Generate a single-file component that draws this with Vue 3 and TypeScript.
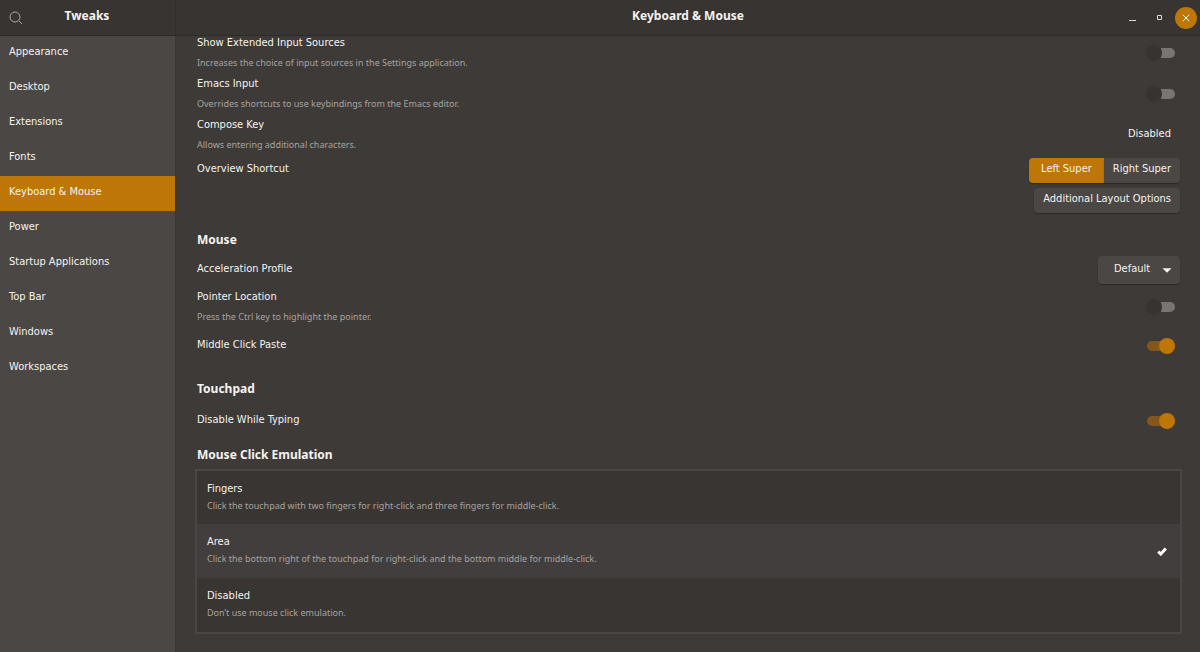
<script setup lang="ts">
import { ref } from 'vue'

const pages = ['Appearance', 'Desktop', 'Extensions', 'Fonts', 'Keyboard & Mouse', 'Power', 'Startup Applications', 'Top Bar', 'Windows', 'Workspaces']
const current = ref('Keyboard & Mouse')

const extended = ref(false)
const emacs = ref(false)
const pointer = ref(false)
const middlePaste = ref(true)
const whileTyping = ref(true)
const overview = ref('Left Super')
const profile = ref('Default')
const emulation = ref('Area')

const modes = [
  { name: 'Fingers', note: 'Click the touchpad with two fingers for right-click and three fingers for middle-click.' },
  { name: 'Area', note: 'Click the bottom right of the touchpad for right-click and the bottom middle for middle-click.' },
  { name: 'Disabled', note: 'Don’t use mouse click emulation.' },
]
</script>

<template>
  <div class="window">
    <header class="titlebar">
      <div class="side-head">
        <button class="search" aria-label="Search">
          <svg width="14" height="14" viewBox="0 0 14 14"><circle cx="6" cy="6" r="5" /><path d="M9.6 9.6 13 13" /></svg>
        </button>
        <h1 class="app-name">Tweaks</h1>
      </div>
      <div class="main-head">
        <h2 class="page-name">Keyboard &amp; Mouse</h2>
        <div class="controls">
          <button class="ctl" aria-label="Minimize"><svg width="8" height="8" viewBox="0 0 8 8"><path d="M1 6.5h7" /></svg></button>
          <button class="ctl" aria-label="Maximize"><svg width="8" height="8" viewBox="0 0 8 8"><path d="M2.5 1.5h4v4h-4z" /></svg></button>
          <button class="ctl close" aria-label="Close"><svg width="8" height="8" viewBox="0 0 8 8"><path d="M.8.8l6.4 6.4M7.2.8.8 7.2" /></svg></button>
        </div>
      </div>
    </header>
    <div class="body">
      <nav class="sidebar">
        <a v-for="p in pages" :key="p" href="#" class="nav" :class="{ active: p === current }" @click.prevent="current = p">{{ p }}</a>
      </nav>
      <main class="content">
        <div class="described">
          <div class="row">
            <label class="text" for="extended"><span class="title">Show Extended Input Sources</span><span class="note">Increases the choice of input sources in the Settings application.</span></label>
            <input id="extended" v-model="extended" class="switch" type="checkbox" role="switch" />
          </div>
          <div class="row">
            <label class="text" for="emacs"><span class="title">Emacs Input</span><span class="note">Overrides shortcuts to use keybindings from the Emacs editor.</span></label>
            <input id="emacs" v-model="emacs" class="switch" type="checkbox" role="switch" />
          </div>
          <div class="row">
            <label class="text" for="compose"><span class="title">Compose Key</span><span class="note">Allows entering additional characters.</span></label>
            <button id="compose" class="flat">Disabled</button>
          </div>
        </div>
        <div class="row overview">
          <span id="overview-label" class="title">Overview Shortcut</span>
          <div class="segment" role="group" aria-labelledby="overview-label">
            <button v-for="s in ['Left Super', 'Right Super']" :key="s" :class="{ active: overview === s }" :aria-pressed="overview === s" @click="overview = s">{{ s }}</button>
          </div>
        </div>
        <button class="layout-options">Additional Layout Options</button>

        <h3 class="heading mouse">Mouse</h3>
        <div class="row accel">
          <label class="title" for="profile">Acceleration Profile</label>
          <div class="combo">
            <select id="profile" v-model="profile"><option>Default</option><option>Adaptive</option><option>Flat</option></select>
            <svg width="10" height="5" viewBox="0 0 10 5"><path d="M.5.3h9L5 4.7z" /></svg>
          </div>
        </div>
        <div class="row pointer">
          <label class="text" for="pointer"><span class="title">Pointer Location</span><span class="note">Press the Ctrl key to highlight the pointer.</span></label>
          <input id="pointer" v-model="pointer" class="switch" type="checkbox" role="switch" />
        </div>
        <div class="row single paste">
          <label class="title" for="paste">Middle Click Paste</label>
          <input id="paste" v-model="middlePaste" class="switch" type="checkbox" role="switch" />
        </div>

        <h3 class="heading touchpad">Touchpad</h3>
        <div class="row single typing">
          <label class="title" for="typing">Disable While Typing</label>
          <input id="typing" v-model="whileTyping" class="switch" type="checkbox" role="switch" />
        </div>

        <h3 id="emulation" class="heading emulation">Mouse Click Emulation</h3>
        <div class="list" role="radiogroup" aria-labelledby="emulation">
          <label v-for="m in modes" :key="m.name" class="item" :class="{ chosen: emulation === m.name }">
            <span class="item-text"><span class="title">{{ m.name }}</span><span class="note">{{ m.note }}</span></span>
            <input v-model="emulation" type="radio" name="emulation" :value="m.name" />
            <svg v-if="emulation === m.name" class="tick" width="10" height="9" viewBox="0 0 10 9"><path d="M1.2 4.6 3.8 7 8.8 1.6" /></svg>
          </label>
        </div>
      </main>
    </div>
  </div>
</template>

<style>
body { background: #3e3a37; }
</style>

<style scoped>
.window { display: flex; flex-direction: column; height: 100vh; overflow: hidden; background: #3e3a37; color: #f5f3f0; font: 11px/18px "DejaVu Sans Condensed", "Noto Sans", sans-serif; }
button, select, input { margin: 0; padding: 0; border: 0; background: none; color: inherit; font: inherit; }
h1, h2, h3 { margin: 0; font: bold 12px/18px "Noto Sans", sans-serif; }
svg { display: block; fill: none; stroke: #dedbd8; }

.titlebar { display: flex; flex: none; height: 36px; box-sizing: border-box; background: #383431; border-bottom: 1px solid #2f2b29; }
.side-head { display: flex; align-items: center; width: 176px; box-sizing: border-box; padding-left: 9px; border-right: 1px solid #322e2c; }
.search svg { stroke: #aaa7a4; stroke-width: 1; }
.app-name { flex: 1; padding: 0 24px 4px 0; text-align: center; }
.main-head { display: flex; flex: 1; align-items: center; }
.page-name { flex: 1; padding: 0 0 4px 79px; text-align: center; }
.controls { display: flex; align-items: center; gap: 5px; padding-right: 3px; }
.ctl { display: flex; align-items: center; justify-content: center; width: 22px; height: 22px; border-radius: 50%; }
.close { background: #be7606; }
.close svg { stroke: #fff; }

.body { display: flex; flex: 1; min-height: 0; }
.sidebar { width: 176px; flex: none; box-sizing: border-box; border-right: 1px solid #3a3633; background: #4b4744; }
.nav { display: block; box-sizing: border-box; height: 35px; padding: 7px 9px; color: inherit; text-decoration: none; }
.nav.active { background: #be7606; }

.content { flex: 1; min-width: 0; padding: 0 18px 0 21px; box-sizing: border-box; }
.row { display: flex; align-items: center; justify-content: space-between; }
.described { display: grid; gap: 9px; padding-top: 1px; }
.row .text { flex: 1; }
.title, .note { display: block; }
.note { color: #a6a3a0; font: 9px/16px "Noto Sans", sans-serif; }
.text .title { line-height: 12px; }
.text .note { margin-top: 8px; line-height: 12px; }
.flat { padding: 0 11px 2px; }
.row > .switch { margin-right: 7px; }

.switch { appearance: none; position: relative; width: 29px; height: 16px; }
.switch::before { content: ""; position: absolute; left: 1px; right: 0; top: 3px; height: 10px; border-radius: 5px; background: linear-gradient(90deg, transparent 50%, #787572 50%); }
.switch::after { content: ""; position: absolute; left: 0; top: 0; width: 16px; height: 16px; border-radius: 50%; background: #373330; }
.switch:checked::before { background: #84561a; }
.switch:checked::after { left: 13px; background: #be7606; }

.segment button, .layout-options, .combo { background: #4b4744; box-shadow: 0 1px 1px #2c2927; }
.overview { margin-top: 7px; }
.overview .title, .single .title { padding-bottom: 3px; }
.segment { display: flex; margin-right: 2px; }
.segment button { height: 25px; padding: 0 9px 3px; border-radius: 0 4px 4px 0; }
.segment button:first-child { padding: 0 12px 3px; border-radius: 4px 0 0 4px; }
.segment .active { background: #be7606; }
.layout-options { display: block; height: 25px; margin: 5px 2px 0 auto; padding: 0 9px 3px; border-radius: 4px; }

.mouse { margin-top: 18px; }
.accel { margin-top: 7px; }
.accel > .title { padding-bottom: 3px; }
.combo { position: relative; margin-right: 2px; border-radius: 4px; }
.combo select { display: block; appearance: none; width: 82px; height: 28px; padding: 0 24px 3px 16px; }
.combo svg { position: absolute; right: 8px; top: 12px; fill: #f5f3f0; stroke: none; pointer-events: none; }
.combo option { background: #4b4744; }
.pointer { margin-top: 7px; }
.single { height: 26px; }
.paste { margin-top: 10px; }
.touchpad { margin-top: 21px; }
.typing { margin-top: 10px; }
.emulation { margin-top: 12px; }

.list { margin: 5px 0 0 -2px; border: 2px solid #4a4643; background: #393532; }
.item { display: flex; align-items: center; justify-content: space-between; position: relative; box-sizing: border-box; height: 53px; padding: 0 13px 0 10px; }
.item + .item { height: 54px; }
.item-text { padding-bottom: 2px; }
.item.chosen { background: #423e3d; }
.item input { appearance: none; position: absolute; }
.tick { stroke: #fff; stroke-width: 3; }
</style>
